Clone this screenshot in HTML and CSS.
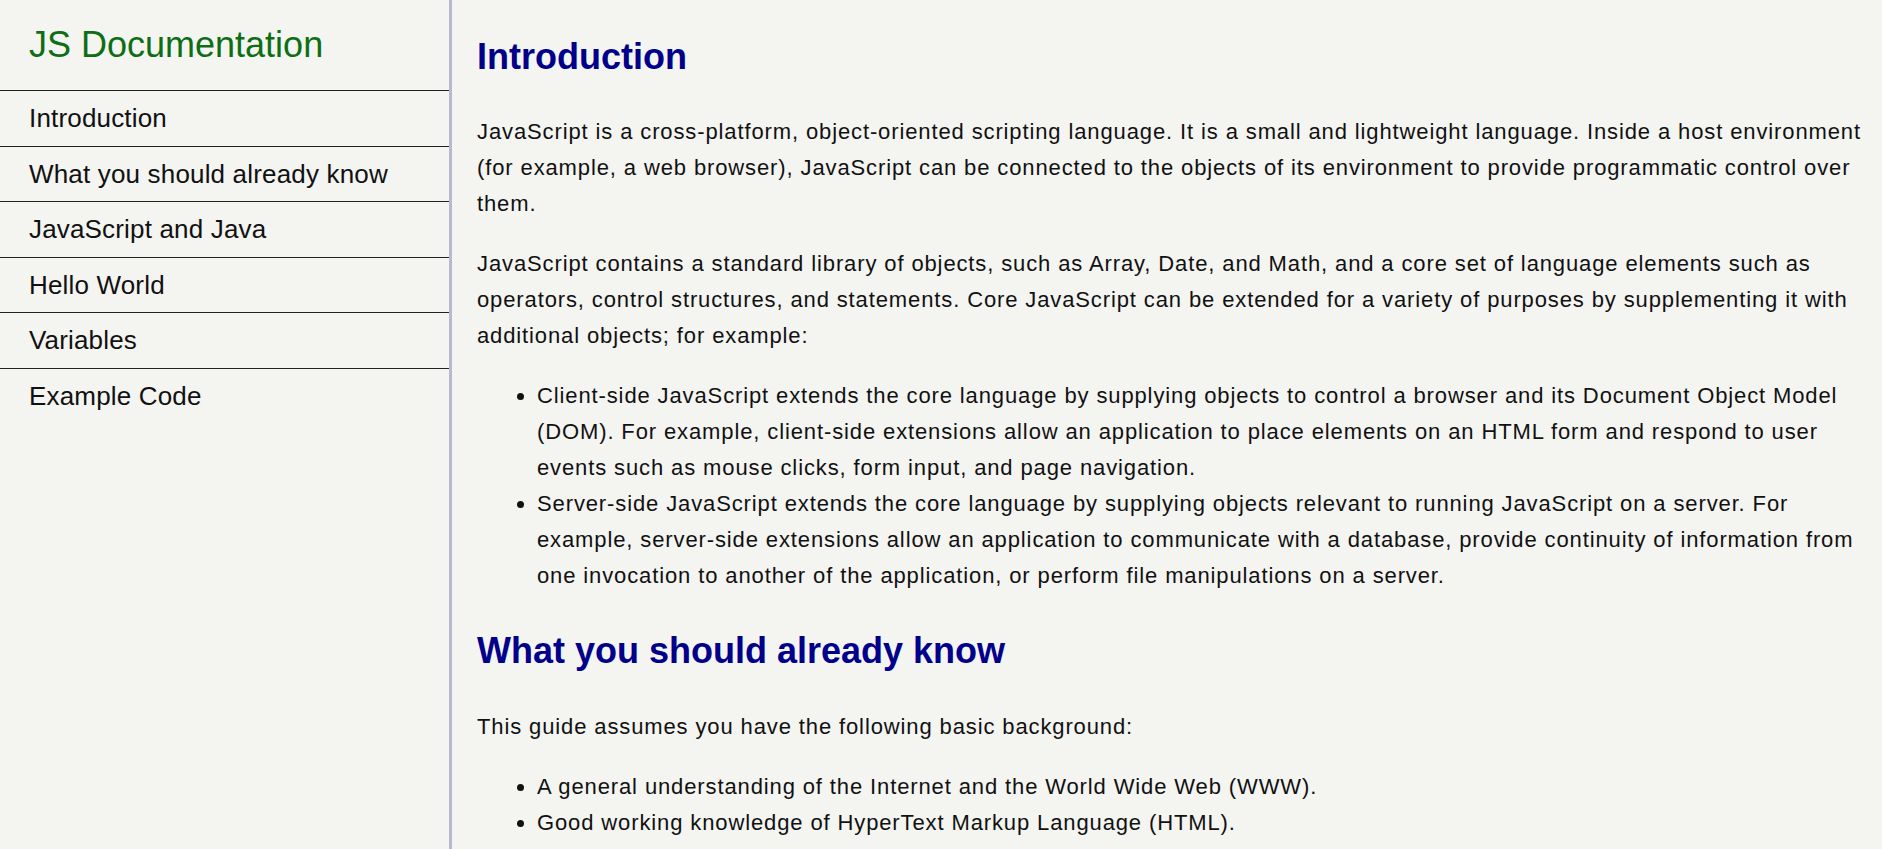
FILE: index.html
```html
<!DOCTYPE html>
<html lang="en">
<head>
<meta charset="utf-8">
<title>JS Documentation</title>
<link rel="stylesheet" href="styles.css">
</head>
<body>
<div class="page">
  <nav class="sidebar" id="navbar">
    <header class="sidebar-title">JS Documentation</header>
    <ul class="nav-list">
      <li><a class="nav-link" href="#Introduction">Introduction</a></li>
      <li><a class="nav-link" href="#What_you_should_already_know">What you should already know</a></li>
      <li><a class="nav-link" href="#JavaScript_and_Java">JavaScript and Java</a></li>
      <li><a class="nav-link" href="#Hello_World">Hello World</a></li>
      <li><a class="nav-link" href="#Variables">Variables</a></li>
      <li><a class="nav-link" href="#Example_Code">Example Code</a></li>
    </ul>
  </nav>
  <main class="main" id="main-doc">
    <section class="doc-section" id="Introduction">
      <header class="section-title">Introduction</header>
      <p>JavaScript is a cross-platform, object-oriented scripting language. It is a small and lightweight language. Inside a host environment (for example, a web browser), JavaScript can be connected to the objects of its environment to provide programmatic control over them.</p>
      <p>JavaScript contains a standard library of objects, such as Array, Date, and Math, and a core set of language elements such as operators, control structures, and statements. Core JavaScript can be extended for a variety of purposes by supplementing it with additional objects; for example:</p>
      <ul class="doc-list">
        <li>Client-side JavaScript extends the core language by supplying objects to control a browser and its Document Object Model (DOM). For example, client-side extensions allow an application to place elements on an HTML form and respond to user events such as mouse clicks, form input, and page navigation.</li>
        <li>Server-side JavaScript extends the core language by supplying objects relevant to running JavaScript on a server. For example, server-side extensions allow an application to communicate with a database, provide continuity of information from one invocation to another of the application, or perform file manipulations on a server.</li>
      </ul>
    </section>
    <section class="doc-section" id="What_you_should_already_know">
      <header class="section-title">What you should already know</header>
      <p>This guide assumes you have the following basic background:</p>
      <ul class="doc-list">
        <li>A general understanding of the Internet and the World Wide Web (WWW).</li>
        <li>Good working knowledge of HyperText Markup Language (HTML).</li>
      </ul>
    </section>
  </main>
</div>
</body>
</html>
```
FILE: styles.css
```css
html, body {
  margin: 0;
  padding: 0;
  background: #f4f4f1;
}

body {
  font-family: "Liberation Sans", Arial, sans-serif;
  color: #111111;
  overflow: hidden;
}

.page {
  display: flex;
  align-items: stretch;
  min-height: 100vh;
}

.sidebar {
  flex: 0 0 449px;
  width: 449px;
  border-right: 3px solid #b8b8d4;
  min-height: 100vh;
}

.sidebar-title {
  font-size: 36px;
  line-height: 41.4px;
  color: #0d6e14;
  padding: 24px 29px 24.6px;
}

.nav-list {
  list-style: none;
  margin: 0;
  padding: 0;
}

.nav-list li {
  border-top: 1px solid #222222;
}

.nav-link {
  display: block;
  font-size: 26px;
  line-height: 30px;
  letter-spacing: 0.17px;
  padding: 12px 29px 12.5px;
  color: #111111;
  text-decoration: none;
}

.main {
  flex: 1 1 auto;
  min-width: 0;
  padding: 0 10px 0 25px;
  font-size: 22px;
  line-height: 36px;
  letter-spacing: 0.88px;
}

.section-title {
  font-size: 36px;
  line-height: 41.4px;
  font-weight: bold;
  letter-spacing: 0;
  color: #00008b;
  margin: 36px 0 37px;
}

.doc-section p {
  margin: 24px 0;
}

.doc-list {
  margin: 24px 0;
  padding-left: 60px;
}
```
